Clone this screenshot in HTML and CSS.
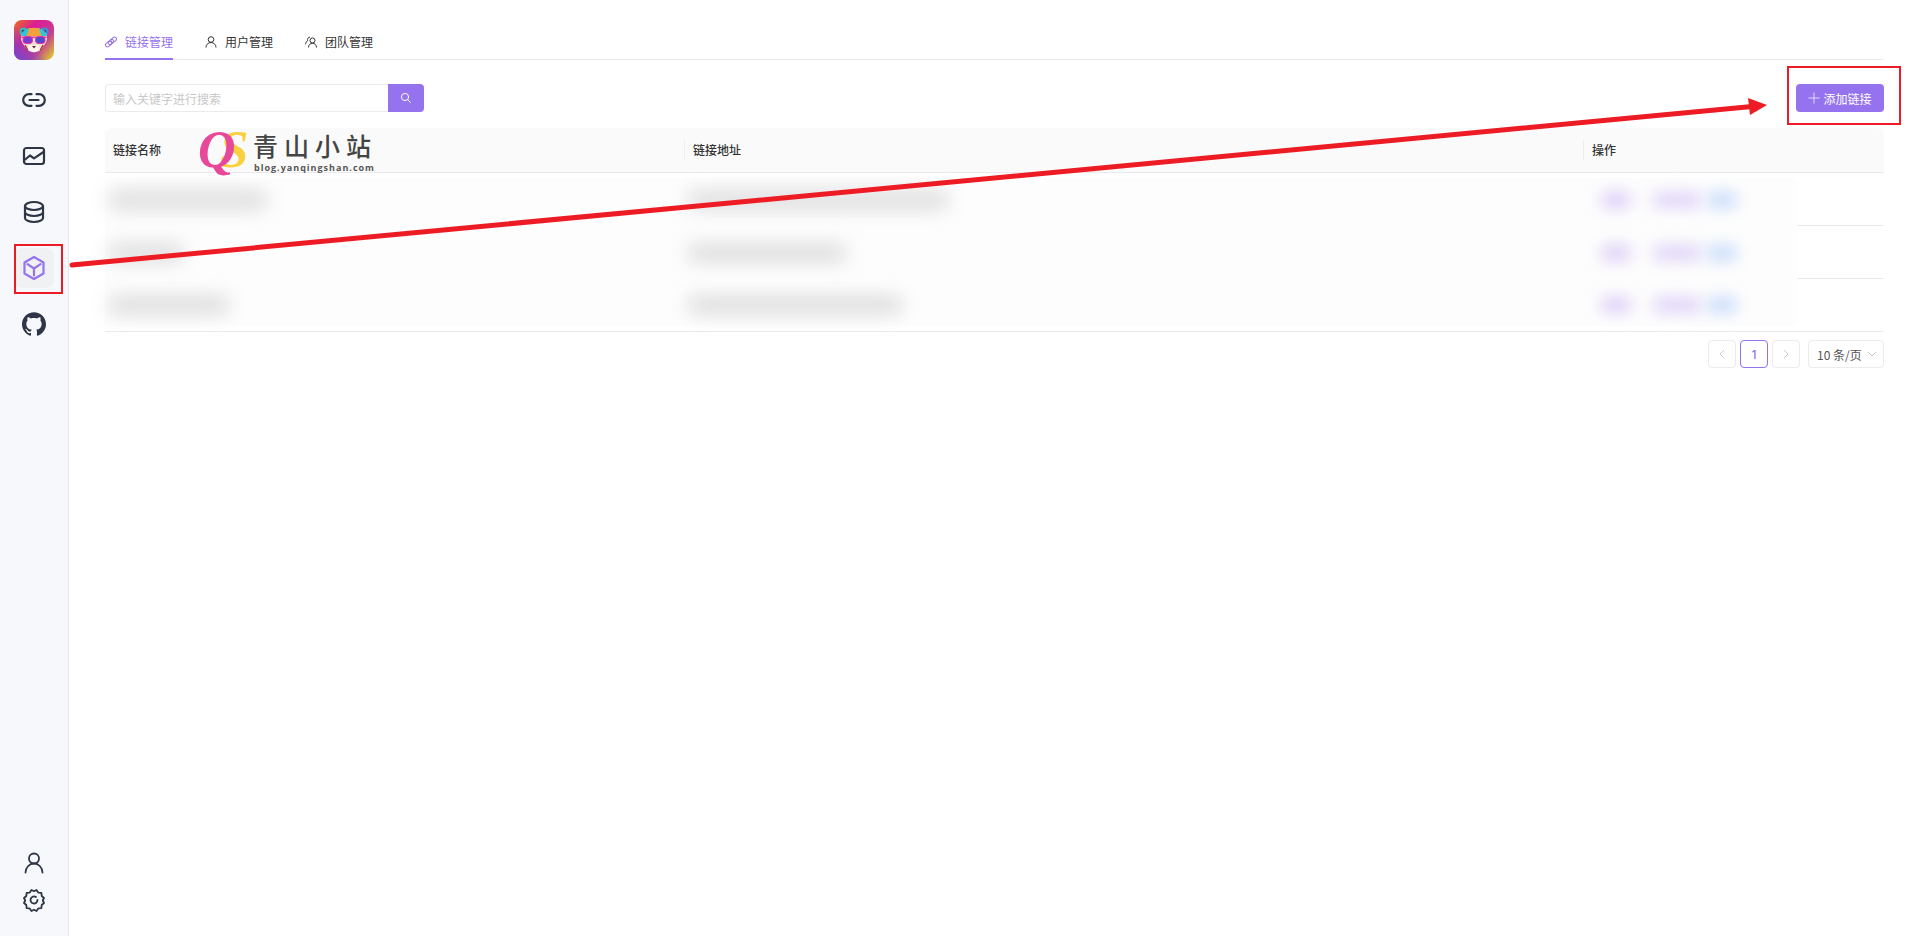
FILE: index.html
```html
<!DOCTYPE html>
<html lang="zh-CN">
  <head>
    <meta charset="UTF-8" />
    <meta name="viewport" content="width=device-width, initial-scale=1.0" />
    <title>链接管理</title>
    <link rel="stylesheet" href="styles.css">
  </head>
  <body>
    <aside class="sidebar">
      <div class="logo">
        <svg viewBox="0 0 40 40" width="40" height="40">
          <defs>
            <linearGradient id="logoBase" x1="0" y1="0.1" x2="1" y2="0.9">
              <stop offset="0" stop-color="#e8642a" />
              <stop offset="0.32" stop-color="#dc1c96" />
              <stop offset="0.68" stop-color="#c63d92" />
              <stop offset="1" stop-color="#d9cc2c" />
            </linearGradient>
            <linearGradient id="logoSide" x1="0" y1="1" x2="0.45" y2="0.55">
              <stop offset="0" stop-color="#6a4ad0" />
              <stop offset="1" stop-color="#6a4ad0" stop-opacity="0" />
            </linearGradient>
          </defs>
          <rect width="40" height="40" rx="8" fill="url(#logoBase)" />
          <rect width="40" height="40" rx="8" fill="url(#logoSide)" />
          <circle cx="9.500" cy="11.500" r="4" fill="#35b8b0" />
          <circle cx="30.500" cy="11.500" r="4" fill="#3f8fd0" />
          <circle cx="9.500" cy="11.500" r="1.800" fill="#274a78" />
          <circle cx="30.500" cy="11.500" r="1.800" fill="#5a3a80" />
          <path d="M7 18c0-7 6-10 13-10s13 3 13 10c0 4-3 7-5 10-2 3-5 4-8 4s-6-1-8-4c-2-3-5-6-5-10z" fill="#f1ddd0" />
          <path d="M7.300 16c1-6 6-8 12.700-8s11.700 2 12.700 8z" fill="#2cc6dc" />
          <path d="M15 8.300c3-.8 7-.8 10 0l2.500 7.700h-15z" fill="#f2a23c" />
          <path d="M7.500 16.500h25v1.500h-25z" fill="#e8389a" />
          <rect x="9" y="16.500" width="9.500" height="7" rx="3" fill="#7a3ad0" stroke="#ea2f9a" />
          <rect x="21.500" y="16.500" width="9.500" height="7" rx="3" fill="#5049cc" stroke="#ea2f9a" />
          <path d="M15 25h10l1.500 5-6.500 2.500-6.500-2.500z" fill="#fff6ee" />
          <path d="M18 26h4l-2 2.500z" fill="#6a1a2a" />
          <path d="M11 25l3 5.500M29 25l-3 5.500" stroke="#a8322c" stroke-width="1.200" fill="none" />
        </svg>
      </div>
      <nav class="side-nav">
        <a class="side-item">
          <svg class="side-icon" viewBox="0 0 24 24"><path d="M9.500 6.200H7a5.800 5.800 0 0 0 0 11.600h2.500M14.500 6.200H17a5.800 5.800 0 0 1 0 11.600h-2.500M7.500 12h9" /></svg>
        </a>
        <a class="side-item">
          <svg class="side-icon" viewBox="0 0 24 24"><rect x="2" y="4" width="20" height="16" rx="2.500" /><path d="M2.500 16l5.500-4.500 4 2.800L21.500 8" /></svg>
        </a>
        <a class="side-item">
          <svg class="side-icon" viewBox="0 0 24 24"><ellipse cx="12" cy="6" rx="9" ry="4" /><path d="M3 6v12c0 2.200 4 4 9 4s9-1.800 9-4V6M3 12c0 2.200 4 4 9 4s9-1.800 9-4" /></svg>
        </a>
        <a class="side-item is-active">
          <svg class="side-icon" viewBox="0 0 24 24"><path d="M12 1l9.500 5.500v11L12 23l-9.500-5.500v-11zM5.500 8.200L12 12.500l6.500-4.300M12 12.500v7" /></svg>
        </a>
        <a class="side-item">
          <svg class="side-icon github" viewBox="0 0 24 24"><path d="M12 .297c-6.630 0-12 5.373-12 12 0 5.303 3.438 9.800 8.205 11.385.6.113.82-.258.82-.577 0-.285-.01-1.040-.015-2.040-3.338.724-4.042-1.610-4.042-1.610C4.422 18.070 3.633 17.700 3.633 17.700c-1.087-.744.084-.729.084-.729 1.205.084 1.838 1.236 1.838 1.236 1.070 1.835 2.809 1.305 3.495.998.108-.776.417-1.305.76-1.605-2.665-.3-5.466-1.332-5.466-5.930 0-1.310.465-2.380 1.235-3.220-.135-.303-.54-1.523.105-3.176 0 0 1.005-.322 3.300 1.230.96-.267 1.980-.399 3-.405 1.020.006 2.040.138 3 .405 2.280-1.552 3.285-1.230 3.285-1.230.645 1.653.24 2.873.12 3.176.765.84 1.230 1.910 1.230 3.220 0 4.610-2.805 5.625-5.475 5.920.42.36.81 1.096.81 2.220 0 1.606-.015 2.896-.015 3.286 0 .315.21.69.825.57C20.565 22.092 24 17.592 24 12.297c0-6.627-5.373-12-12-12" /></svg>
        </a>
      </nav>
      <div class="side-bottom">
        <a class="side-foot">
          <svg class="side-icon thin" viewBox="0 0 24 24"><circle cx="12" cy="7.500" r="5" /><path d="M3.500 21.500c0-4.700 3.800-9 8.500-9s8.500 4.300 8.500 9" /></svg>
        </a>
        <a class="side-foot">
          <svg class="side-icon thin" viewBox="0 0 24 24"><path d="M9.500 2l2.500 1.200L14.500 2l1.800 2.600 3.100.3.300 3.100 2.300 2-1.200 2.500 1.200 2.500-2.300 2-.3 3.100-3.100.3-1.800 2.600-2.500-1.200-2.500 1.200-1.800-2.600-3.100-.3-.3-3.100-2.300-2 1.200-2.500-1.200-2.500 2.300-2 .3-3.100 3.100-.3z" /><path d="M15.500 12a3.500 3.500 0 1 1-1.500-2.900" /></svg>
        </a>
      </div>
    </aside>

    <main class="main">
      <div class="tabs">
        <div class="tab is-active">
          <svg class="tab-icon" viewBox="0 0 12 12"><g transform="rotate(-40 6 6)"><rect x="-0.5" y="4" width="6.500" height="4" rx="2" /><rect x="3" y="4" width="6" height="4" rx="2" /><rect x="6.500" y="4" width="6" height="4" rx="2" /></g></svg>
          <span>链接管理</span>
        </div>
        <div class="tab">
          <svg class="tab-icon" viewBox="0 0 12 12"><circle cx="6" cy="3.500" r="2.800" /><path d="M1 11.500c0-3 2.200-5 5-5s5 2 5 5" /></svg>
          <span>用户管理</span>
        </div>
        <div class="tab">
          <svg class="tab-icon" viewBox="0 0 12 12"><circle cx="7.500" cy="4.500" r="2.500" /><path d="M3.500 11.500c0-2.500 1.800-4.300 4-4.300s4 1.800 4 4.300M5 1.200a2.400 2.400 0 0 0-2.300 3.300c-1.200.9-2 2.200-2.200 3.800" /></svg>
          <span>团队管理</span>
        </div>
      </div>

      <div class="toolbar">
        <div class="search">
          <input class="search-input" type="text" placeholder="输入关键字进行搜索">
          <button class="search-btn" type="button">
            <svg viewBox="0 0 12 12" width="12" height="12"><circle cx="5" cy="5" r="3.600" /><path d="M7.700 7.700l3 3" /></svg>
          </button>
        </div>
        <button class="add-btn" type="button">
          <svg viewBox="0 0 12 12" width="12" height="12"><path d="M6 .5v11M.5 6h11" /></svg>
          添加链接
        </button>
      </div>

      <div class="table">
        <div class="table-head">
          <div class="th">链接名称</div>
          <div class="th">链接地址</div>
          <div class="th">操作</div>
        </div>
        <div class="table-body">
          <div class="row">
            <div class="row-main">
              <div class="cell cell-name"><i class="smudge" style="width:156px"></i></div>
              <div class="cell cell-url"><i class="smudge" style="width:258px"></i></div>
              <div class="cell cell-ops"><i class="smudge op-a"></i><i class="smudge op-b"></i><i class="smudge op-c"></i></div>
            </div>
            <div class="row-tail"></div>
          </div>
          <div class="row">
            <div class="row-main">
              <div class="cell cell-name"><i class="smudge" style="width:72px"></i></div>
              <div class="cell cell-url"><i class="smudge" style="width:156px"></i></div>
              <div class="cell cell-ops"><i class="smudge op-a"></i><i class="smudge op-b"></i><i class="smudge op-c"></i></div>
            </div>
            <div class="row-tail"></div>
          </div>
          <div class="row">
            <div class="row-main">
              <div class="cell cell-name"><i class="smudge" style="width:118px"></i></div>
              <div class="cell cell-url"><i class="smudge" style="width:212px"></i></div>
              <div class="cell cell-ops"><i class="smudge op-a"></i><i class="smudge op-b"></i><i class="smudge op-c"></i></div>
            </div>
            <div class="row-tail"></div>
          </div>
        </div>
      </div>

      <div class="pager">
        <button class="page-btn is-off" type="button">
          <svg viewBox="0 0 10 10" width="10" height="10"><path d="M7 1L3 5l4 4" /></svg>
        </button>
        <button class="page-btn is-current" type="button">1</button>
        <button class="page-btn is-off" type="button">
          <svg viewBox="0 0 10 10" width="10" height="10"><path d="M3 1l4 4-4 4" /></svg>
        </button>
        <div class="page-size">
          <span>10 条/页</span>
          <svg viewBox="0 0 10 10" width="10" height="10"><path d="M1 3l4 4 4-4" /></svg>
        </div>
      </div>
    </main>

    <!-- watermark and hand drawn notes sit on top of the screenshot -->
    <div class="watermark">
      <span class="wm-mark"><span class="wm-q">Q</span><span class="wm-s">S</span></span>
      <span class="wm-title">青山小站</span>
      <span class="wm-url">blog.yanqingshan.com</span>
    </div>
    <svg class="notes" viewBox="0 0 1920 936" width="1920" height="936">
      <rect x="15" y="245" width="47" height="48" />
      <rect x="1788" y="67" width="112" height="57" />
      <path class="arrow-line" d="M72 265L1752 106.500" />
      <path class="arrow-head" d="M1748 98L1767 105L1750 115Z" />
    </svg>
  </body>
</html>
```

FILE: styles.css
```css
* {
  box-sizing: border-box;
}

body {
  margin: 0;
  height: 936px;
  display: flex;
  overflow: hidden;
  background-color: #fff;
  color: #333;
  font-family: "Noto Sans CJK SC", "Noto Sans", sans-serif;
  font-size: 12px;
}

button {
  border: none;
  padding: 0;
  font-family: inherit;
  font-size: 12px;
}

/* Sidebar */
.sidebar {
  width: 69px;
  flex-shrink: 0;
  display: flex;
  flex-direction: column;
  align-items: center;
  padding: 20px 0 18px;
  background-color: #f6f8fb;
  border-right: 1px solid #e6e8ec;
}

.logo {
  width: 40px;
  height: 40px;
}

.side-nav {
  display: flex;
  flex-direction: column;
  gap: 16px;
  margin-top: 20px;
}

.side-item {
  width: 40px;
  height: 40px;
  display: flex;
  align-items: center;
  justify-content: center;
  border-radius: 8px;
}

.side-item.is-active {
  background-color: #f0f1f3;
  color: #9673ee;
}

.side-icon {
  width: 24px;
  height: 24px;
  fill: none;
  stroke: #2e3646;
  stroke-width: 2.2;
  stroke-linecap: round;
  stroke-linejoin: round;
}

.side-icon.thin {
  stroke-width: 1.8;
}

.is-active .side-icon {
  stroke: #9673ee;
}

.side-icon.github {
  fill: #2e3646;
  stroke: none;
}

.side-bottom {
  margin-top: auto;
  display: flex;
  flex-direction: column;
}

.side-foot {
  height: 37px;
  display: flex;
  align-items: center;
  justify-content: center;
}

/* Main */
.main {
  flex: 1;
  min-width: 0;
  padding: 30px 36px 0;
}

.tabs {
  display: flex;
  gap: 32px;
  height: 30px;
  border-bottom: 1px solid #eaeaee;
}

.tab {
  height: 30px;
  display: flex;
  align-items: center;
  gap: 8px;
  padding-bottom: 6px;
  color: #333;
  line-height: 18px;
}

.tab.is-active {
  color: #9673ee;
  border-bottom: 2px solid #9673ee;
  padding-bottom: 4px;
}

.tab-icon {
  width: 12px;
  height: 12px;
  fill: none;
  stroke: #333;
  stroke-width: 1;
}

.is-active .tab-icon {
  stroke: #9673ee;
}

.toolbar {
  display: flex;
  justify-content: space-between;
  margin-top: 24px;
}

.search {
  display: flex;
  width: 319px;
  height: 28px;
}

.search-input {
  flex: 1;
  min-width: 0;
  padding: 0 7px;
  border: 1px solid #ebebef;
  border-right: none;
  border-radius: 4px 0 0 4px;
  outline: none;
  font-family: inherit;
  font-size: 12px;
}

.search-input::placeholder {
  color: #c8c8c8;
}

.search-btn {
  width: 36px;
  display: flex;
  align-items: center;
  justify-content: center;
  background-color: #9673ee;
  border-radius: 0 4px 4px 0;
}

.search-btn svg {
  fill: none;
  stroke: #fff;
  stroke-width: 1;
}

.add-btn {
  width: 88px;
  height: 28px;
  display: flex;
  align-items: center;
  justify-content: center;
  gap: 3px;
  background-color: #9673ee;
  border-radius: 4px;
  color: #fff;
}

.add-btn svg {
  fill: none;
  stroke: #e4dbfa;
  stroke-width: 1;
}

/* Table */
.table {
  margin-top: 16px;
}

.table-head {
  display: grid;
  grid-template-columns: 579px 899px 1fr;
  height: 45px;
  align-items: center;
  background-color: #fafafa;
  border-bottom: 1px solid #eaeaee;
  border-radius: 8px 8px 0 0;
}

.th {
  padding-left: 8px;
  font-weight: 500;
  line-height: 20px;
}

.th + .th {
  border-left: 1px solid #eeeeee;
}

.table-body {
  border-bottom: 1px solid #eaeaee;
}

.row {
  display: flex;
  height: 53px;
}

.row:last-child {
  height: 52px;
}

.row-main {
  flex: 1;
  display: grid;
  grid-template-columns: 579px 899px 1fr;
  align-items: center;
  background-color: #fdfdfd;
}

.row:first-child .row-main {
  background-image: linear-gradient(#fff 5px, #fdfdfd 5px);
}

.row:last-child .row-main {
  background-image: linear-gradient(#fdfdfd 47px, #fff 47px);
}

.row-tail {
  width: 87px;
  border-bottom: 1px solid #eaeaee;
}

.row:last-child .row-tail {
  border-bottom: none;
}

.cell {
  display: flex;
  align-items: center;
  padding-left: 5px;
}

/* the real values were blurred out in the screenshot */
.smudge {
  display: block;
  height: 14px;
  background-color: #d2d2d2;
  filter: blur(10px);
}

.cell-ops {
  padding-left: 19px;
}

.op-a,
.op-b,
.op-c {
  filter: blur(8px);
}

.op-a {
  width: 28px;
  background-color: #d9c9f7;
}

.op-b {
  width: 46px;
  margin-left: 24px;
  background-color: #dccff8;
}

.op-c {
  width: 28px;
  margin-left: 8px;
  background-color: #c1d7fb;
}

/* Pagination */
.pager {
  display: flex;
  justify-content: flex-end;
  gap: 4px;
  margin-top: 8px;
}

.page-btn {
  width: 28px;
  height: 28px;
  display: flex;
  align-items: center;
  justify-content: center;
  background-color: #fff;
  border: 1px solid #ebebef;
  border-radius: 4px;
}

.page-btn svg,
.page-size svg {
  fill: none;
  stroke: #c9c9c9;
  stroke-width: 1;
}

.page-btn.is-current {
  border-color: #9673ee;
  color: #9673ee;
  font-family: "Inter", sans-serif;
  font-weight: 500;
}

.page-size {
  width: 76px;
  height: 28px;
  margin-left: 4px;
  display: flex;
  align-items: center;
  justify-content: space-between;
  padding: 0 6px 0 8px;
  border: 1px solid #ebebef;
  border-radius: 4px;
  color: #555;
}

/* Overlays */
.watermark {
  position: absolute;
  left: 198px;
  top: 125px;
  width: 180px;
  height: 52px;
  pointer-events: none;
}

.wm-mark {
  position: absolute;
  left: 0;
  top: 0;
  font-family: "Liberation Serif", serif;
  font-size: 52px;
  font-style: italic;
  font-weight: 700;
  line-height: 50px;
  white-space: nowrap;
}

.wm-q {
  position: relative;
  z-index: 1;
  color: #e8489a;
}

.wm-s {
  margin-left: -16px;
  color: #f8d040;
}

.wm-title {
  position: absolute;
  left: 55px;
  top: 5px;
  font-size: 25px;
  font-weight: 500;
  line-height: 30px;
  letter-spacing: 6px;
  color: #444;
  white-space: nowrap;
}

.wm-url {
  position: absolute;
  left: 56px;
  top: 36px;
  font-family: "Open Sans", sans-serif;
  font-size: 9px;
  font-weight: 700;
  line-height: 14px;
  letter-spacing: 1px;
  color: #555;
  white-space: nowrap;
}

.notes {
  position: absolute;
  left: 0;
  top: 0;
  pointer-events: none;
}

.notes rect {
  fill: none;
  stroke: #ed1c24;
  stroke-width: 2;
}

.arrow-line {
  fill: none;
  stroke: #ed1c24;
  stroke-width: 5;
  stroke-linecap: round;
}

.arrow-head {
  fill: #ed1c24;
}
```
